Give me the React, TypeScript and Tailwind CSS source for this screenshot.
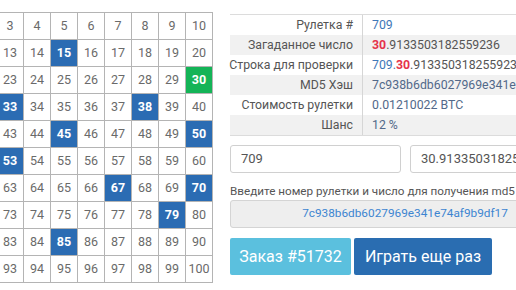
import React from "react"

const blue = [15, 33, 38, 45, 50, 53, 67, 70, 79, 85]
const green = [30]

const font = { fontFamily: 'Roboto, "Liberation Sans", sans-serif' }

function Cell({ n }: { n: number }) {
  const isBlue = blue.includes(n)
  const isGreen = green.includes(n)
  const cls = isBlue
    ? "bg-[#2b6cb3] text-white font-bold"
    : isGreen
      ? "bg-[#14b457] text-white font-bold"
      : "bg-white text-[#6a6a6a]"
  return (
    <div
      className={`flex h-[27px] w-[27px] items-center justify-center border-r border-b border-[#b4b4b4] text-[12.5px] ${cls}`}
    >
      {n}
    </div>
  )
}

function InfoRow({ label, children, striped }: { label: string; children: React.ReactNode; striped?: boolean }) {
  return (
    <div className={`flex h-[20px] items-center text-[12.3px] ${striped ? "bg-[#f1f1f1]" : "bg-white"}`}>
      <div className="flex h-full w-[133px] shrink-0 items-center justify-end whitespace-nowrap border-r border-[#d6d6d6] pr-[9px] text-[#555]">
        {label}
      </div>
      <div className="flex-1 whitespace-nowrap pl-[9px]">{children}</div>
    </div>
  )
}

export default function App() {
  const numbers = Array.from({ length: 100 }, (_, i) => i + 1)

  return (
    <div className="flex h-[290px] w-[516px] overflow-hidden bg-white" style={font}>
      <div className="w-[213px] shrink-0 overflow-hidden pt-[12px]">
        <div className="-ml-[58px] grid w-[271px] grid-cols-[repeat(10,27px)] border-t border-l border-[#b4b4b4]">
          {numbers.map((n) => (
            <Cell key={n} n={n} />
          ))}
        </div>
      </div>

      <div className="ml-[17px] w-[350px] shrink-0 pt-[14px]">
        <div className="border-t border-b border-[#dcdcdc]">
          <InfoRow label="Рулетка #">
            <span className="text-[#3f78b8]">709</span>
          </InfoRow>
          <InfoRow label="Загаданное число" striped>
            <span className="font-bold text-[#e5334b]">30</span>
            <span className="text-[#555]">.9133503182559236</span>
          </InfoRow>
          <InfoRow label="Строка для проверки">
            <span className="text-[#3f78b8]">709.</span>
            <span className="font-bold text-[#e5334b]">30</span>
            <span className="text-[#555]">.9133503182559236</span>
          </InfoRow>
          <InfoRow label="MD5 Хэш" striped>
            <span className="text-[#52698a]">7c938b6db6027969e341e74af9b9df17</span>
          </InfoRow>
          <InfoRow label="Стоимость рулетки">
            <span className="text-[#52698a]">0.01210022 BTC</span>
          </InfoRow>
          <InfoRow label="Шанс" striped>
            <span className="text-[#52698a]">12 %</span>
          </InfoRow>
        </div>

        <div className="mt-[9px] flex gap-[9px]">
          <div className="flex h-[28px] w-[171px] items-center rounded-[3px] border border-[#d0d0d0] px-[10px] text-[13px] text-[#555]">
            709
          </div>
          <div className="flex h-[28px] flex-1 items-center whitespace-nowrap rounded-[3px] border border-[#d0d0d0] px-[10px] text-[13px] text-[#555]">
            30.9133503182559236
          </div>
        </div>

        <div className="mt-[10px] whitespace-nowrap text-[11.7px] leading-[16px] text-[#555]">
          Введите номер рулетки и число для получения md5
        </div>

        <div className="mt-[1px] flex h-[28px] items-center justify-center whitespace-nowrap rounded-[3px] border border-[#d4d4d4] bg-[#eeeeee] text-[11.8px] text-[#3d85d1]">
          7c938b6db6027969e341e74af9b9df17
        </div>

        <div className="mt-[10px] flex gap-[3px]">
          <button className="h-[37px] w-[121px] rounded-[2px] bg-[#5bc0de] text-[16px] text-white">
            Заказ #51732
          </button>
          <button className="h-[37px] w-[138px] rounded-[2px] bg-[#2a6db1] text-[16px] text-white">
            Играть еще раз
          </button>
        </div>
      </div>
    </div>
  )
}
